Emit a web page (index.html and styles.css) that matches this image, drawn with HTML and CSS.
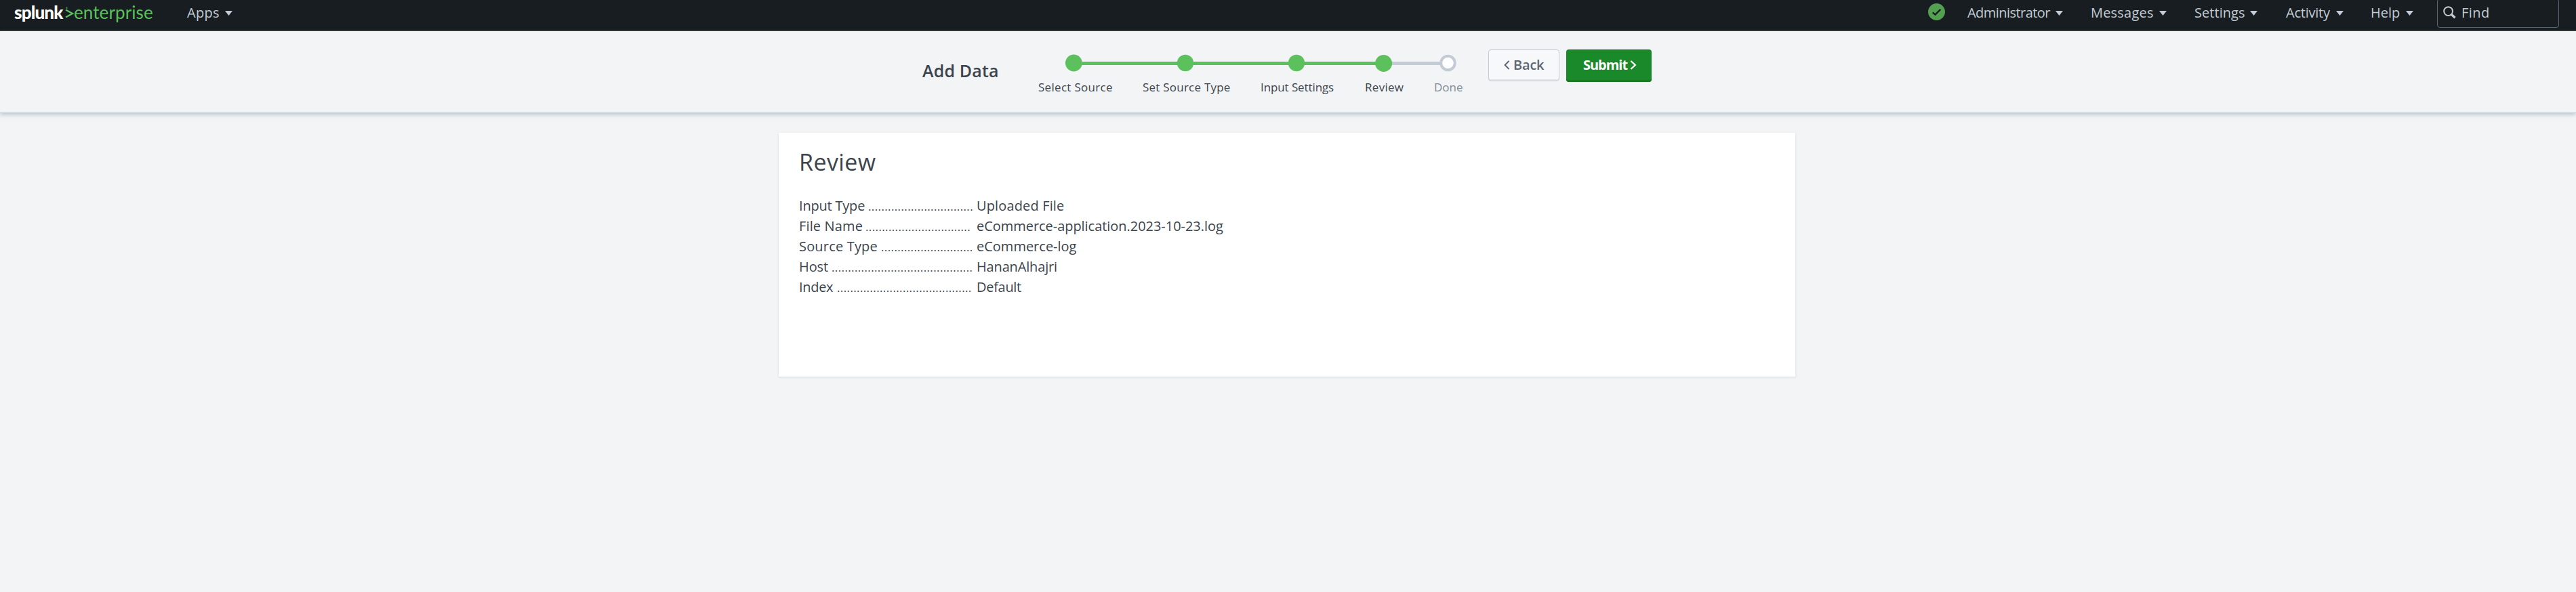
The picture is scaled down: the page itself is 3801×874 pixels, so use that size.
FILE: index.html
```html
<!DOCTYPE html>
<html lang="en">
<head>
<meta charset="utf-8">
<title>Add Data - Review | Splunk</title>
<link rel="stylesheet" href="styles.css">
</head>
<body>
<nav class="topbar">
  <div class="logo"><span class="logo-name">splunk</span><svg class="logo-mark" width="13" height="18" viewBox="0 0 13 18"><path d="M1 4.5 11 10 1 15.5" fill="none" stroke="#5cc05c" stroke-width="2.3"/><circle cx="2.4" cy="1.8" r="1.2" fill="#3f9143"/></svg><span class="logo-product">enterprise</span></div>
  <a class="menu menu-apps"><span>Apps</span><i class="caret"></i></a>
  <div class="topbar-right">
    <svg class="health" width="25" height="25" viewBox="0 0 25 25"><circle cx="12.5" cy="12.5" r="12.5" fill="#53a051"/><path d="M6.8 13.3 10.5 16.6 18.3 8.9" fill="none" stroke="#171d21" stroke-width="2.4"/></svg>
    <a class="menu menu-admin"><span>Administrator</span><i class="caret"></i></a>
    <a class="menu menu-messages"><span>Messages</span><i class="caret"></i></a>
    <a class="menu menu-settings"><span>Settings</span><i class="caret"></i></a>
    <a class="menu menu-activity"><span>Activity</span><i class="caret"></i></a>
    <a class="menu menu-help"><span>Help</span><i class="caret"></i></a>
    <div class="find"><svg width="19" height="19" viewBox="0 0 19 19" fill="none" stroke="#c3cbd4"><circle cx="7.6" cy="7.6" r="6.4" stroke-width="2"/><path d="M12 12 17.5 17.3" stroke-width="3.4"/></svg><span>Find</span></div>
  </div>
</nav>
<header class="wizard">
  <h1 class="wizard-title">Add Data</h1>
  <div class="steps">
    <svg class="track" width="577" height="26" viewBox="0 0 577 26">
      <path d="M12 13.4H470" stroke="#5cc05c" stroke-width="5"/>
      <path d="M470 13.4H565" stroke="#c3cbd4" stroke-width="5"/>
      <g fill="#5cc05c"><circle cx="12.4" cy="13" r="12.4"/><circle cx="177" cy="13" r="12.2"/><circle cx="341" cy="13" r="12.2"/><circle cx="469.6" cy="13.5" r="12.5"/></g>
      <circle cx="564.5" cy="13" r="10.3" fill="#fff" stroke="#c3cbd4" stroke-width="4"/>
    </svg>
    <div class="labels">
      <span class="label-source">Select Source</span>
      <span class="label-type">Set Source Type</span>
      <span class="label-input">Input Settings</span>
      <span class="label-review">Review</span>
      <span class="label-done">Done</span>
    </div>
  </div>
  <div class="actions">
    <button class="btn btn-back"><svg width="9" height="14" viewBox="0 0 9 14"><path d="M7.6 1 1.6 7 7.6 13" fill="none" stroke="#5c6773" stroke-width="1.9"/></svg><span>Back</span></button>
    <button class="btn btn-submit"><span>Submit</span><svg width="10" height="14" viewBox="0 0 10 14"><path d="M1.4 1 7.8 7 1.4 13" fill="none" stroke="#fff" stroke-width="2.3"/></svg></button>
  </div>
</header>
<main class="panel">
  <h2 class="panel-title">Review</h2>
  <dl class="summary">
    <dt><span class="key-input">Input Type</span><i class="dots">................................</i></dt><dd class="val-input">Uploaded File</dd>
    <dt><span class="key-file">File Name</span><i class="dots">................................</i></dt><dd class="val-file">eCommerce-application.2023-10-23.log</dd>
    <dt><span class="key-type">Source Type</span><i class="dots">............................</i></dt><dd class="val-type">eCommerce-log</dd>
    <dt><span class="key-host">Host</span><i class="dots">...........................................</i></dt><dd class="val-host">HananAlhajri</dd>
    <dt><span class="key-index">Index</span><i class="dots">.........................................</i></dt><dd class="val-index">Default</dd>
  </dl>
</main>
</body>
</html>
```
FILE: styles.css
```css
* { box-sizing: border-box; }
body { margin: 0; min-height: 874px; background: #f2f4f5; color: #3c444d; font: 20px/30px "Open Sans", sans-serif; }
span { white-space: nowrap; }
svg { display: block; flex: none; }

/* Top navigation */
.topbar { display: flex; height: 46px; padding-left: 21px; background: #171d21; border-bottom: 1px solid #3c444d; color: #c3cbd4; }
.logo { display: flex; width: 253px; font-family: Lato, sans-serif; font-size: 26px; line-height: 32px; padding-top: 2px; }
.logo-name { width: 75px; color: #fff; font-weight: 900; letter-spacing: -.85px; }
.logo-mark { margin-top: 8px; }
.logo-product { color: #5cc05c; letter-spacing: .1px; }
.menu { display: flex; flex: none; padding-top: 4px; }
.menu span { flex: none; }
.caret { width: 11px; height: 7px; margin-top: 12px; background: #c3cbd4; clip-path: polygon(0 0, 100% 0, 50% 100%); }
.menu-apps { padding-left: 2px; }
.menu-apps span { width: 56px; letter-spacing: .3px; }
.topbar-right { display: flex; margin-left: auto; padding-right: 25px; }
.health { margin: 5px 33px 0 0; }
.menu-admin { width: 182px; }
.menu-admin span { width: 130px; letter-spacing: -.55px; }
.menu-messages { width: 153px; }
.menu-messages span { width: 101px; letter-spacing: .2px; }
.menu-settings { width: 135px; }
.menu-settings span { width: 82px; letter-spacing: .05px; }
.menu-activity { width: 125px; }
.menu-activity span { width: 74px; letter-spacing: -.22px; }
.menu-help { width: 98px; }
.menu-help span { width: 52px; }
.find { display: flex; width: 180px; height: 43px; margin-top: -2px; padding: 5px 0 0 8px; border: 1px solid #5c6773; border-radius: 4px; }
.find svg { margin: 5px 8px 0 0; }
.find span { letter-spacing: .45px; }

/* Wizard header */
.wizard { display: flex; height: 120px; padding-left: 1361px; box-shadow: 0 1px 0 #c6d0d8, 0 3px 6px rgba(130, 145, 160, .5); }
.wizard-title { width: 170px; margin: 41px 0 0; font-size: 25px; line-height: 34px; font-weight: 600; letter-spacing: .15px; white-space: nowrap; }
.steps { width: 665px; padding-top: 34px; }
.track { margin-left: 41px; }
.labels { display: flex; padding: 8px 0 0 1px; font-size: 17px; line-height: 30px; }
.labels span { flex: none; }
.label-source { width: 154px; letter-spacing: .3px; }
.label-type { width: 174px; letter-spacing: .23px; }
.label-input { width: 154px; letter-spacing: -.1px; }
.label-review { width: 102px; letter-spacing: .3px; }
.label-done { color: #818d99; }
.actions { display: flex; gap: 10px; padding-top: 27px; }
.btn { display: flex; height: 48px; padding: 8px 0 0; font: 600 20px/30px "Open Sans", sans-serif; border: 0; border-radius: 4px; }
.btn-back { width: 105px; height: 47px; padding: 7px 0 0 22px; border: 1px solid #c3cbd4; background: #f7f8fa; color: #5c6773; box-shadow: inset 0 -2px 0 #e1e6eb; }
.btn-back svg { margin: 8px 5px 0 0; }
.btn-back span { letter-spacing: -.2px; }
.btn-submit { width: 126px; padding-left: 21px; background: #1a8929; color: #fff; font-weight: 700; box-shadow: inset 0 -3px 0 #187a25; }
.btn-submit span { width: 73px; letter-spacing: -1px; }
.btn-submit svg { margin-top: 8px; }

/* Review panel */
.panel { width: 1500px; height: 360px; margin: 30px 0 0 1149px; padding: 23px 30px 0 30px; background: #fff; box-shadow: 0 1px 3px rgba(60, 80, 110, .15); }
.panel-title { margin: 0; font-size: 34px; line-height: 40px; font-weight: 400; letter-spacing: .4px; }
.summary { display: grid; grid-template-columns: 258px 1fr; grid-auto-rows: 30px; column-gap: 4px; margin: 30px 0 0; }
dt { display: flex; }
dt span { flex: none; }
dd { margin: 0; white-space: nowrap; }
.dots { font-style: normal; font-size: 17px; line-height: 32px; height: 30px; letter-spacing: .38px; }
.key-input { width: 102px; letter-spacing: -.2px; }
.key-file { width: 98px; letter-spacing: .15px; }
.key-type { width: 121px; letter-spacing: .18px; }
.key-host { width: 48px; letter-spacing: -.1px; }
.key-index { width: 56px; letter-spacing: -.3px; }
.val-input { letter-spacing: .14px; }
.val-file { letter-spacing: -.04px; }
.val-host { letter-spacing: -.16px; }
.val-index { letter-spacing: -.3px; }
```
